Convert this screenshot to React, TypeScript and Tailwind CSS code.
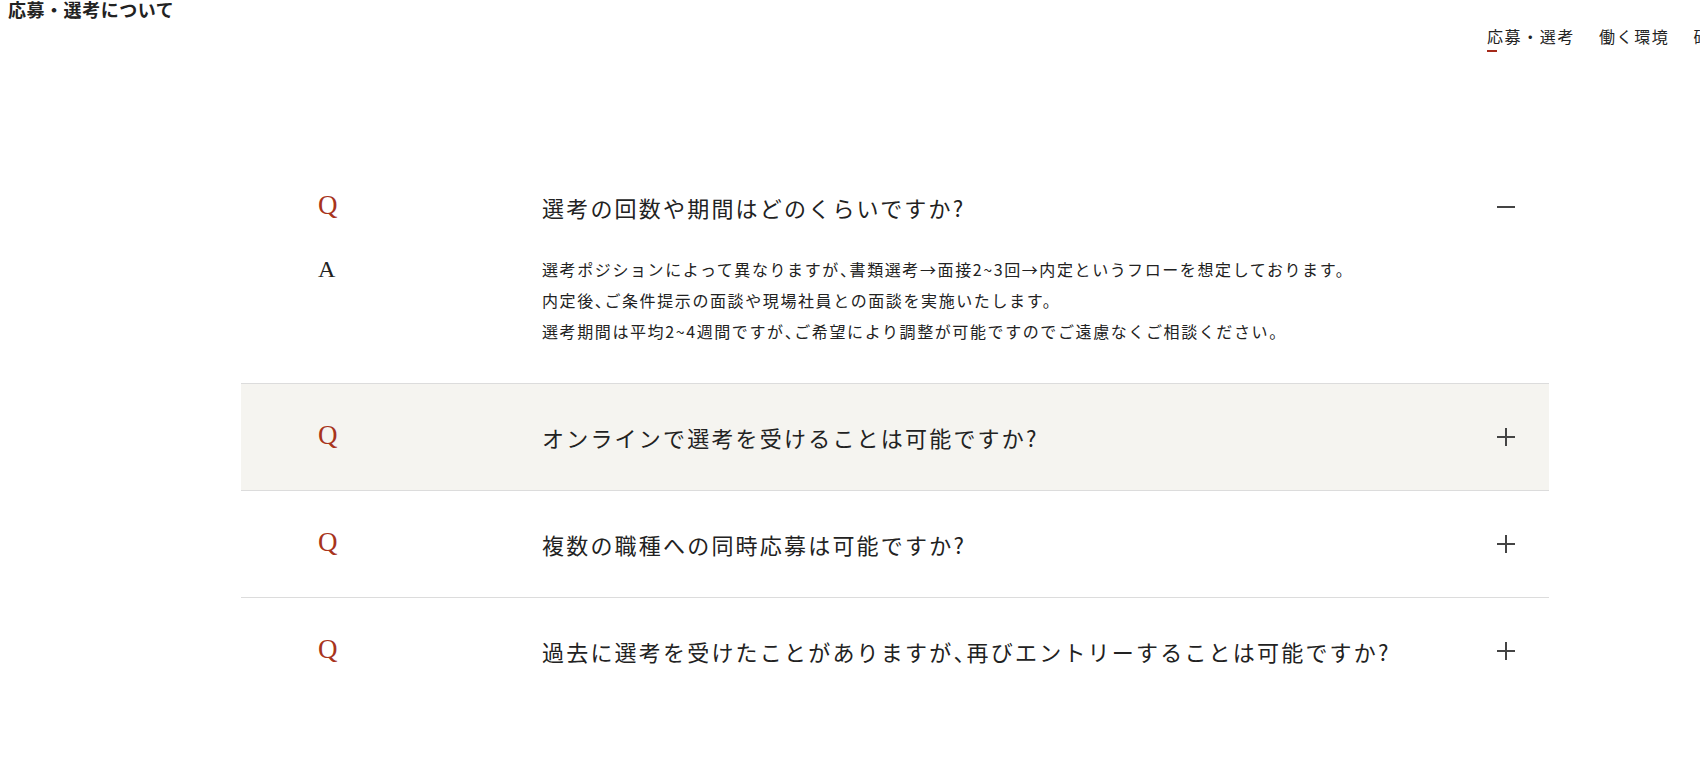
import { useState } from "react"

const faqs = [
  {
    q: "選考の回数や期間はどのくらいですか?",
    a: [
      "選考ポジションによって異なりますが、書類選考→面接2~3回→内定というフローを想定しております。",
      "内定後、ご条件提示の面談や現場社員との面談を実施いたします。",
      "選考期間は平均2~4週間ですが、ご希望により調整が可能ですのでご遠慮なくご相談ください。",
    ],
  },
  { q: "オンラインで選考を受けることは可能ですか?", a: ["オンラインでの面接にも対応しております。"] },
  { q: "複数の職種への同時応募は可能ですか?", a: ["可能です。"] },
  { q: "過去に選考を受けたことがありますが、再びエントリーすることは可能ですか?", a: ["可能です。"] },
]

const nav = ["応募・選考", "働く環境", "研修制度", "キャリア"]

const sans = "font-['Noto_Sans_CJK_JP','Noto_Sans',sans-serif]"
const serif = "font-['Liberation_Serif','Times_New_Roman',serif]"

// the original sets the reading comma at half width
function Jp({ text }: { text: string }) {
  const parts = text.split("、")
  return (
    <>
      {parts.map((p, i) => (
        <span key={i}>
          {p}
          {i < parts.length - 1 && <span className="[font-feature-settings:'halt']">、</span>}
        </span>
      ))}
    </>
  )
}

export default function App() {
  const [open, setOpen] = useState(0)

  return (
    <div className={`min-h-screen overflow-hidden bg-white text-[#222] ${sans}`}>
      {/* Header */}
      <header className="h-[154px]">
        <h1 className="pl-2 text-[18px] font-bold leading-[19px] tracking-[0.03em]">応募・選考について</h1>
        <nav className="mt-[9px] flex gap-6 whitespace-nowrap pl-[1487px]">
          {nav.map((item, i) => (
            <div key={item} className="shrink-0">
              <span className="block text-[16px] leading-[16px] tracking-[0.1em]">{item}</span>
              {i === 0 && <span className="mt-[6px] block h-[2px] w-[10px] bg-[#a52a1a]" />}
            </div>
          ))}
        </nav>
      </header>

      {/* FAQ */}
      <main className="ml-[241px] w-[1308px]">
        {faqs.map((item, i) => {
          const isOpen = open === i
          const last = i === faqs.length - 1
          return (
            <div key={item.q} className={last ? "" : "border-b border-[#dcdcdc]"}>
              <button
                onClick={() => setOpen(isOpen ? -1 : i)}
                className={`flex w-full items-center py-9 text-left ${i === 1 ? "bg-[#f5f4f0]" : ""} ${
                  isOpen ? "pb-[30px]" : ""
                }`}
              >
                <span className={`-mt-[4px] w-[301px] shrink-0 pl-[77px] text-[27px] leading-[34px] text-[#a8341c] ${serif}`}>Q</span>
                <span className="flex-1 text-[22px] leading-[34px] tracking-[0.1em]">
                  <Jp text={item.q} />
                </span>
                <span className="relative mr-[34px] h-[18px] w-[18px] shrink-0">
                  <span className="absolute left-0 top-[8px] h-[2px] w-[18px] bg-[#444]" />
                  {!isOpen && <span className="absolute left-[8px] top-0 h-[18px] w-[2px] bg-[#444]" />}
                </span>
              </button>
              {isOpen && (
                <div className="flex pb-9">
                  <span className={`w-[301px] shrink-0 pl-[77px] text-[24px] leading-[31px] ${serif}`}>A</span>
                  <div className="text-[16px] leading-[31px] tracking-[0.1em]">
                    {item.a.map((line) => (
                      <p key={line}>
                        <Jp text={line} />
                      </p>
                    ))}
                  </div>
                </div>
              )}
            </div>
          )
        })}
      </main>
    </div>
  )
}
